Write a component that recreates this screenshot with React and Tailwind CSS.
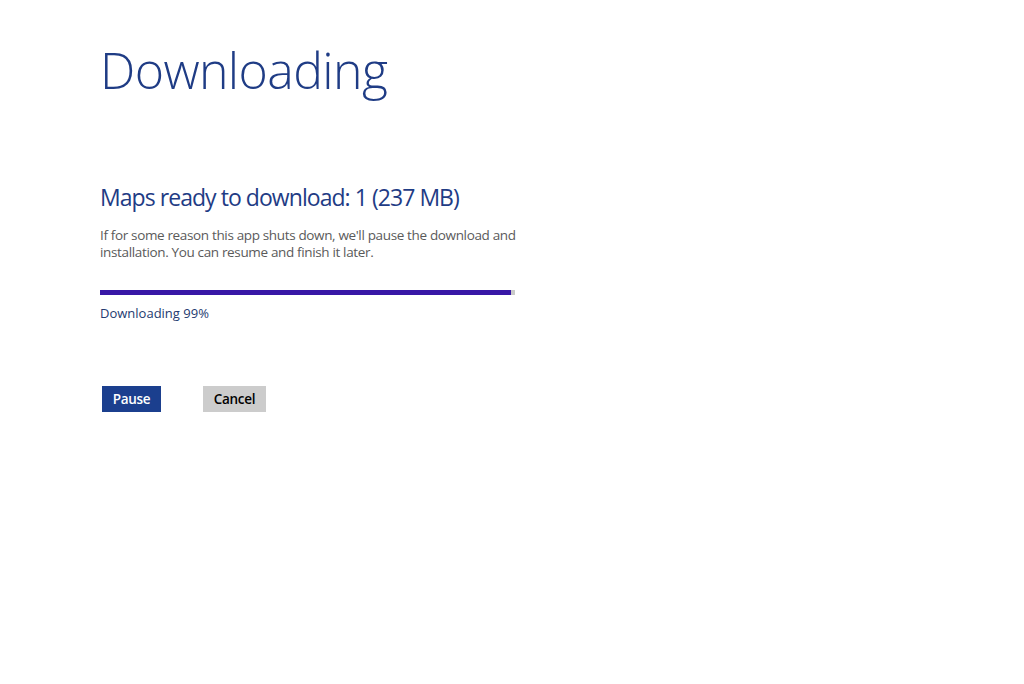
import React from 'react';

function App() {
  const progress = 99;
  return (
    <div className="min-h-[684px] w-[1024px] bg-white font-['Open_Sans',sans-serif]">
      <div className="pl-[100px] pt-[45px]">
        <h1 className="text-[50px] font-light leading-none tracking-[-0.6px] text-[#1f3c85]">Downloading</h1>

        <h2 className="mt-[91px] text-[23px] font-normal leading-none tracking-[-0.95px] text-[#1f3c85]">
          Maps ready to download: 1 (237 MB)
        </h2>
        <p className="mt-[18px] w-[430px] text-[13.5px] leading-[17px] tracking-[-0.35px] text-[#5a5a5a]">
          If for some reason this app shuts down, we'll pause the download and installation. You can resume and finish it later.
        </p>

        <div className="mt-[29px] flex h-[5px] w-[415px] bg-[#c9c9c9]">
          <div className="h-full bg-[#3817a6]" style={{ width: `${progress}%` }} />
        </div>
        <div className="mt-[9px] text-[13px] text-[#243a70]">Downloading {progress}%</div>

        <div className="mt-[62px] flex gap-[42px] pl-[2px]">
          <button className="h-[26px] w-[59px] bg-[#1b3f8e] pt-[1px] text-[13.5px] font-semibold tracking-[-0.3px] text-white">Pause</button>
          <button className="h-[26px] w-[63px] bg-[#cccccc] pt-[1px] text-[13.5px] font-semibold tracking-[-0.3px] text-black">Cancel</button>
        </div>
      </div>
    </div>
  );
}

export default App;
